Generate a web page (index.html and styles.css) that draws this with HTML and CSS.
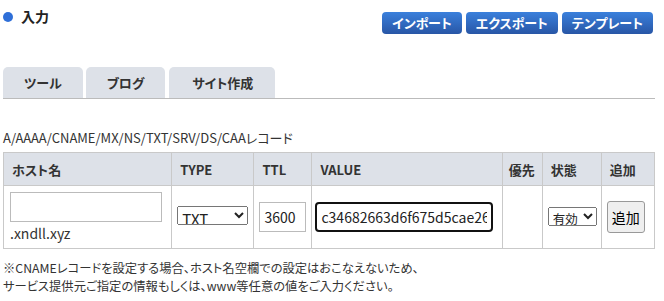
FILE: index.html
```html
<!DOCTYPE html>
<html lang="ja">
<head>
<meta charset="UTF-8">
<title>DNS入力</title>
<link rel="stylesheet" href="styles.css">
</head>
<body>
<div class=page>
  <div class=head>
    <h3 class=title><span class=dot></span>入力</h3>
    <div class=tools>
      <button class=blue>インポート</button>
      <button class=blue>エクスポート</button>
      <button class=blue>テンプレート</button>
    </div>
  </div>

  <div class=tabs>
    <div class=tab>ツール</div>
    <div class=tab>ブログ</div>
    <div class=tab>サイト作成</div>
  </div>

  <p class=kinds>A/AAAA/CNAME/MX/NS/TXT/SRV/DS/CAAレコード</p>

  <table class=rec>
    <colgroup>
      <col class=c-host><col class=c-type><col class=c-ttl><col class=c-val>
      <col class=c-pri><col class=c-st><col class=c-add>
    </colgroup>
    <tr>
      <th>ホスト名</th><th>TYPE</th><th>TTL</th><th>VALUE</th>
      <th>優先</th><th>状態</th><th>追加</th>
    </tr>
    <tr>
      <td>
        <input class=host type=text>
        <div class=domain>.xndll.xyz</div>
      </td>
      <td><select class=type><option>TXT</option></select></td>
      <td><input class=ttl type=text value=3600></td>
      <td><input class=val type=text value="c34682663d6f675d5cae2634a1f0"></td>
      <td></td>
      <td><select class=state><option>有効</option></select></td>
      <td><button class=add>追加</button></td>
    </tr>
  </table>

  <div class=note>
    <div>※CNAMEレコードを設定する場合、ホスト名空欄での設定はおこなえないため、</div>
    <div>サービス提供元ご指定の情報もしくは、www等任意の値をご入力ください。</div>
  </div>
</div>
</body>
</html>
```

FILE: styles.css
```css
body {
  margin: 0;
  background: white;
  color: #333;
  font: 13px/17px "Noto Sans CJK JP", sans-serif;
  font-feature-settings: "palt";
}
.page {
  padding: 0 9px 0 3px;
}
.head {
  display: flex;
  justify-content: space-between;
  align-items: flex-start;
}
.title {
  margin: 8px 0 0;
  font-size: 14px;
  line-height: 17px;
  display: flex;
  align-items: center;
  gap: 8px;
  color: #222;
}
.dot {
  width: 10px;
  height: 10px;
  border-radius: 50%;
  background: #2f6fd8;
}
.tools {
  display: flex;
  gap: 4px;
  margin-top: 12px;
  margin-right: 2px;
}
.blue {
  height: 22px;
  padding: 0 10px;
  border: none;
  border-radius: 4px;
  background: linear-gradient(#3a80dc, #2856a6);
  color: white;
  font: bold 13px/22px "Noto Sans CJK JP", sans-serif;
  font-feature-settings: "palt";
}
.tabs {
  display: flex;
  gap: 3px;
  margin-top: 33px;
  border-bottom: 1px solid #bbb;
}
.tab {
  height: 31px;
  line-height: 31px;
  padding: 0 21px;
  background: #dde1e8;
  border-radius: 5px 5px 0 0;
  font-weight: bold;
  font-size: 13px;
}
.tab:last-child { margin-left: 1px; padding: 0 22px 0 23px; }
.kinds {
  margin: 30px 0 6px;
}
.rec {
  width: 652px;
  table-layout: fixed;
  border-collapse: collapse;
}
.c-host { width: 168px; }
.c-type { width: 82px; }
.c-ttl { width: 58px; }
.c-val { width: 190px; }
.c-pri { width: 40px; }
.c-st { width: 59px; }
.c-add { width: 53px; }
.rec th, .rec td {
  border: 1px solid #c9c9c9;
  text-align: left;
}
.rec th {
  height: 32px;
  padding: 0 8px;
  background: #dde1e8;
  white-space: nowrap;
}
.rec th:nth-child(5) { padding: 0 6px; }
.rec td {
  height: 62px;
  padding: 0 5px;
}
.rec td:first-child { padding-left: 6px; }
input, select {
  font: 14px "Noto Sans CJK JP", sans-serif;
  color: #222;
  box-sizing: border-box;
}
.host {
  width: 152px;
  height: 30px;
  border: 1px solid #bbb;
}
.domain {
  margin-top: 3px;
  line-height: 17px;
  font-size: 14px;
}
.type {
  width: 71px;
  height: 19px;
  font-size: 15px;
  padding: 0;
}
.ttl {
  width: 47px;
  height: 30px;
  padding: 0 4px;
  border: 1px solid #bbb;
}
.val {
  width: 178px;
  height: 30px;
  padding: 0 4px;
  border: 2px solid #111;
  border-radius: 4px;
  margin-left: -2px;
}
.state {
  width: 49px;
  height: 19px;
  padding: 0;
  font-size: 12.5px;
}
.add {
  width: 38px;
  height: 32px;
  padding: 0;
  font: 14px "Noto Sans CJK JP", sans-serif;
  background: #efefef;
  border: 1px solid #999;
  border-radius: 3px;
}
.note {
  margin-top: 10px;
  font-size: 12.3px;
  line-height: 18px;
}
```
